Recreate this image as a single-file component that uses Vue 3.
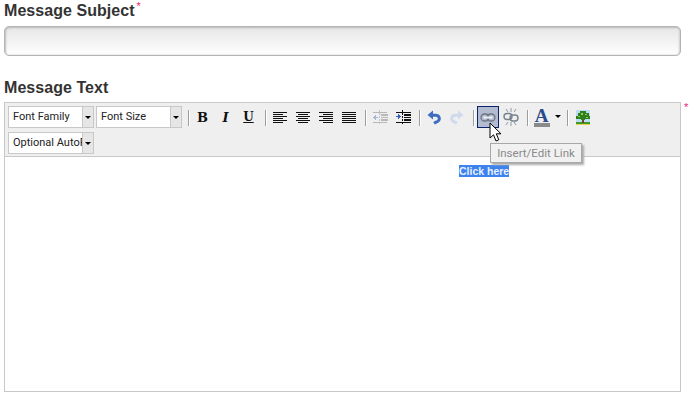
<script setup>
const rows = {
  left: [[1, 14], [1, 10], [1, 14], [1, 10], [1, 14], [1, 10]],
  center: [[1, 14], [3, 10], [1, 14], [3, 10], [1, 14], [3, 10]],
  right: [[1, 14], [5, 10], [1, 14], [5, 10], [1, 14], [5, 10]],
  full: [[1, 14], [1, 14], [1, 14], [1, 14], [1, 14], [1, 14]]
}
const aligns = ['left', 'center', 'right', 'full']
</script>

<template>
  <div class="page">
    <h2 class="label">Message Subject<span class="req">*</span></h2>
    <div class="input"></div>
    <h2 class="label second">Message Text</h2>
    <div class="editor-wrap">
      <div class="editor">
        <div class="toolbar">
          <div class="row">
            <div class="select"><span class="val">Font Family</span><span class="arrow"></span></div>
            <div class="select"><span class="val">Font Size</span><span class="arrow"></span></div>
            <i class="sep"></i>
            <div class="btn"><span class="glyph bold">B</span></div>
            <div class="btn"><span class="glyph ital">I</span></div>
            <div class="btn"><span class="glyph under">U</span></div>
            <i class="sep"></i>
            <div v-for="a in aligns" :key="a" class="btn">
              <svg width="15" height="18" viewBox="0 0 15 18" shape-rendering="crispEdges">
                <rect v-for="(r, i) in rows[a]" :key="i" :x="r[0]" :y="4 + i * 2" :width="r[1]" height="1" fill="#111" />
              </svg>
            </div>
            <i class="sep"></i>
            <div class="btn">
              <svg width="18" height="18" viewBox="0 0 18 18" shape-rendering="crispEdges">
                <path d="M8 2h1v2h-1zM8 5h1v2h-1zM8 8h1v2h-1zM8 11h1v2h-1zM8 14h1v2h-1z" fill="#c4c4c4"/>
                <rect x="2" y="4" width="14" height="1" fill="#b8b8b8"/>
                <rect x="10" y="6" width="7" height="2" fill="#b8b8b8"/>
                <rect x="10" y="9" width="7" height="1" fill="#b8b8b8"/>
                <rect x="10" y="11" width="7" height="2" fill="#b8b8b8"/>
                <rect x="2" y="14" width="14" height="1" fill="#b8b8b8"/>
                <path d="M2 9h1v-1h1v-1h1v2h2v1h-2v2h-1v-1h-1v-1h-1z" fill="#a9b8d8"/>
              </svg>
            </div>
            <div class="btn">
              <svg width="18" height="18" viewBox="0 0 18 18" shape-rendering="crispEdges">
                <path d="M8 2h1v2h-1zM8 5h1v2h-1zM8 8h1v2h-1zM8 11h1v2h-1zM8 14h1v2h-1z" fill="#111"/>
                <rect x="2" y="4" width="15" height="1" fill="#111"/>
                <rect x="10" y="6" width="7" height="2" fill="#111"/>
                <rect x="10" y="9" width="7" height="1" fill="#111"/>
                <rect x="10" y="11" width="7" height="2" fill="#111"/>
                <rect x="2" y="14" width="15" height="1" fill="#111"/>
                <path d="M2 8h2v-2h1v1h1v1h1v1h-1v1h-1v1h-1v-2h-2z" fill="#3a62b8"/>
              </svg>
            </div>
            <i class="sep"></i>
            <div class="btn">
              <svg width="14" height="15" viewBox="0 0 14 15"><path d="M5 5.2H8.3a3.4 3.4 0 0 1 1.2 6.7L7 13.3" fill="none" stroke="#3f6cc0" stroke-width="3"/><path d="M6 0.5V9.5L0.5 5z" fill="#3f6cc0"/></svg>
            </div>
            <div class="btn">
              <svg width="14" height="15" viewBox="0 0 14 15"><path d="M9 5.2H5.7a3.4 3.4 0 0 0 -1.2 6.7L7 13.3" fill="none" stroke="#cfdaec" stroke-width="3"/><path d="M8 0.5V9.5L13.5 5z" fill="#cfdaec"/></svg>
            </div>
            <i class="sep"></i>
            <div class="btn active">
              <svg width="16" height="9" viewBox="0 0 16 9" fill="none">
                <rect x="1" y="1" width="8" height="7" rx="3.5" stroke="#6d7680" stroke-width="1.3"/>
                <rect x="7" y="1" width="8" height="7" rx="3.5" stroke="#6d7680" stroke-width="1.3"/>
                <path d="M3.5 4.5h9" stroke="#f0f3f7" stroke-width="2"/>
              </svg>
            </div>
            <div class="btn">
              <svg width="16" height="18" viewBox="0 0 16 18" fill="none">
                <rect x="1" y="5.5" width="8" height="6" rx="3" stroke="#76828e" stroke-width="1.4"/>
                <rect x="7" y="7" width="8" height="6" rx="3" stroke="#76828e" stroke-width="1.4"/>
                <path d="M3 1l2 3M8 0v4M13 1l-2 3M3 17l2-3M8 18v-4M13 17l-2-3" stroke="#8d98a4"/>
              </svg>
            </div>
            <i class="sep"></i>
            <div class="split">
              <div class="color">
                <span class="glyph acolor">A</span>
                <i class="swatch"></i>
              </div>
              <span class="mini"></span>
            </div>
            <i class="sep"></i>
            <div class="btn">
              <svg class="pic" width="14" height="15" viewBox="0 0 14 15" shape-rendering="crispEdges">
                <rect width="14" height="15" fill="#bcdcf2"/>
                <rect y="12" width="14" height="3" fill="#3f9a2e"/>
                <rect y="14" width="14" height="1" fill="#e9d34a"/>
                <rect x="6" y="7" width="2" height="6" fill="#6b4a1e"/>
                <path d="M0 6h2V3h2V1h6v2h3v3h1v3H9v1H5V9H0z" fill="#2f7f1f"/>
                <path d="M5 3h2v2H5zM9 4h2v1H9zM2 6h2v1H2zM10 7h2v1h-2z" fill="#8fd05c"/>
              </svg>
            </div>
          </div>
          <div class="row">
            <div class="select"><span class="val">Optional AutoF</span><span class="arrow"></span></div>
          </div>
        </div>
        <div class="content"><span class="selected">Click here</span></div>
      </div>
      <span class="req editor-req">*</span>
      <div class="tooltip">Insert/Edit Link</div>
      <svg class="cursor" width="14" height="21" viewBox="0 0 14 21"><path d="M1 1V16L4.5 12.8L7 19L9.8 17.8L7.3 11.8H12z" fill="#fff" stroke="#000" stroke-width="1"/></svg>
    </div>
  </div>
</template>

<style>
html, body { margin: 0; background: #fff; }
</style>

<style scoped>
.page {
  width: 700px;
  height: 413px;
  box-sizing: border-box;
  padding: 2px 0 0 4px;
  overflow: hidden;
  font-family: "Liberation Sans", Arial, sans-serif;
  color: #333;
}
.label {
  margin: 0;
  font-size: 16px;
  line-height: 18px;
  font-weight: bold;
  letter-spacing: 0.05px;
  color: #333;
}
.second { margin-top: 23px; }
.req {
  color: #ee2277;
  font-size: 11px;
  font-weight: normal;
  vertical-align: 6px;
  line-height: 0;
  margin-left: 2px;
}
.input {
  width: 677px;
  height: 30px;
  margin-top: 6px;
  box-sizing: border-box;
  border: 1px solid #b4b4b4;
  border-radius: 5px;
  background: linear-gradient(#e6e6e6, #fff);
  box-shadow: inset 1px 1px 2px #bdbdbd, inset -1px 0 2px #cfcfcf;
}
.editor-wrap {
  position: relative;
  margin-top: 5px;
  width: 677px;
}
.editor {
  width: 677px;
  height: 290px;
  box-sizing: border-box;
  border: 1px solid #c8c8c8;
  display: flex;
  flex-direction: column;
}
.toolbar {
  background: #efefef;
  border-bottom: 1px solid #c8c8c8;
  height: 54px;
  flex: none;
  box-sizing: border-box;
  padding: 3px 0 0 3px;
  display: flex;
  flex-direction: column;
  gap: 4px;
}
.row {
  display: flex;
  align-items: center;
  height: 22px;
}
.select {
  width: 86px;
  height: 22px;
  flex: none;
  box-sizing: border-box;
  border: 1px solid #c8c8c8;
  background: #fff;
  display: flex;
  margin-right: 2px;
  font-family: Roboto, sans-serif;
  font-size: 11px;
  line-height: 20px;
  color: #222;
}
.val {
  flex: 1;
  min-width: 0;
  padding-left: 4px;
  overflow: hidden;
  white-space: nowrap;
}
.arrow {
  width: 10px;
  flex: none;
  background: #e6e6e6;
  border-left: 1px solid #c8c8c8;
  position: relative;
}
.arrow::after, .mini::after {
  content: "";
  position: absolute;
  left: 2px;
  top: 9px;
  border: 3px solid transparent;
  border-top: 3px solid #000;
  border-bottom: 0;
}
.sep {
  width: 1px;
  height: 16px;
  background: #9c9c9c;
  box-shadow: 1px 0 #fff;
  margin: 2px 2px 0 5px;
  flex: none;
}
.select + .sep { margin-left: 4px; }
.btn {
  width: 23px;
  height: 22px;
  box-sizing: border-box;
  flex: none;
  display: flex;
  align-items: center;
  justify-content: center;
}
.btn.active {
  width: 22px;
  margin-left: 1px;
  background: #b2bbd0;
  border: 1px solid #0a246a;
}
.pic { margin-left: 2px; }
.glyph {
  font-family: "DejaVu Serif", serif;
  font-weight: bold;
  color: #111;
  line-height: 1;
}
.bold { font-size: 13px; }
.ital { font-size: 13px; font-style: italic; }
.under { font-size: 12px; text-decoration: underline; }
.split {
  display: flex;
  width: 32px;
  height: 22px;
  flex: none;
}
.color {
  width: 23px;
  display: flex;
  flex-direction: column;
  align-items: center;
  padding-top: 3px;
  box-sizing: border-box;
}
.acolor {
  font-family: "Liberation Serif", serif;
  font-size: 19px;
  line-height: 14px;
  color: #2b4c8c;
}
.swatch {
  width: 16px;
  height: 4px;
  background: #8a8a8a;
  margin-top: 0;
}
.mini {
  width: 9px;
  position: relative;
}
.content {
  flex: 1;
  background: #fff;
  padding: 8px 0 0 454px;
}
.selected {
  display: block;
  width: fit-content;
  background: #3d83f0;
  color: #e9f0ff;
  font-family: "Liberation Sans", sans-serif;
  font-size: 10.5px;
  font-weight: bold;
  line-height: 12px;
}
.editor-req {
  position: absolute;
  left: 680px;
  top: 5px;
  margin: 0;
}
.tooltip {
  position: absolute;
  left: 486px;
  top: 41px;
  width: 92px;
  height: 20px;
  box-sizing: border-box;
  border: 1px solid #a8a8a8;
  background: #f1f1f1;
  box-shadow: 2px 2px 2px #aaa;
  color: #8a8a8a;
  font-family: Roboto, sans-serif;
  font-size: 11.5px;
  line-height: 18px;
  text-align: center;
  white-space: nowrap;
}
.cursor {
  position: absolute;
  left: 485px;
  top: 20px;
}
</style>
